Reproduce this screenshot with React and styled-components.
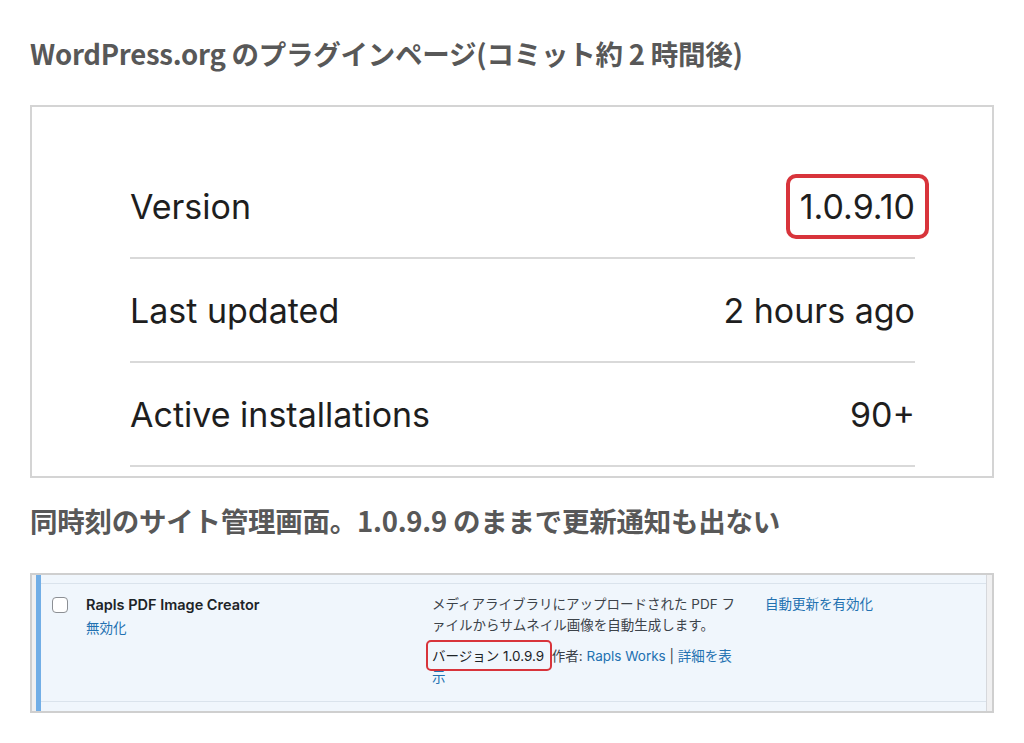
import styled, { createGlobalStyle } from "styled-components";

const GlobalStyle = createGlobalStyle`
  html, body {
    margin: 0;
    padding: 0;
    background: #fff;
  }
`;

const Page = styled.main`
  width: 964px;
  padding: 33px 30px 0;
`;

const Heading = styled.h2`
  margin: ${(p) => p.$top || 0}px 0 0;
  font-family: "Noto Sans CJK JP", sans-serif;
  font-size: 27.5px;
  line-height: 40px;
  font-weight: 700;
  color: #585858;
  letter-spacing: -0.25px;
`;

/* --- WordPress.org plugin page screenshot --- */

const Shot = styled.section`
  margin-top: ${(p) => p.$top}px;
  border: 2px solid #d4d4d4;
  background: #fff;
  padding: 48px 77px 9px 98px;
`;

const MetaRow = styled.div`
  display: flex;
  align-items: center;
  justify-content: space-between;
  height: 102px;
  border-bottom: 2px solid #d9d9d9;
  font-family: Inter, "Liberation Sans", sans-serif;
  font-size: 34px;
  line-height: 41px;
  font-weight: 400;
  color: #1e1e1e;
`;

const Highlight = styled.span`
  display: inline-block;
  padding: 8px 10px;
  margin: -12px -14px;
  border: 4px solid #d8343b;
  border-radius: 10px;
`;

/* --- WordPress admin plugin list screenshot --- */

const AdminShot = styled.section`
  margin-top: ${(p) => p.$top}px;
  border: 2px solid #cfcfcf;
  display: flex;
  font-family: Inter, "Noto Sans CJK JP", sans-serif;
  font-size: 13.5px;
  line-height: 21px;
`;

const Gutter = styled.div`
  width: ${(p) => p.$w}px;
  flex: none;
  background: #f0f0f1;
  border-left: ${(p) => (p.$edge ? "1px solid #d6d8dc" : "none")};
`;

const Accent = styled.div`
  width: 5px;
  flex: none;
  background: #72aee6;
`;

const Table = styled.div`
  flex: 1;
  background: #f0f6fc;
  padding: 8px 0 9px;
`;

const PluginRow = styled.div`
  display: flex;
  border-top: 1px solid #dae3ec;
  border-bottom: 1px solid #dae3ec;
  padding: 10px 0 13px;
`;

const CheckCell = styled.div`
  width: 45px;
  flex: none;
  padding: 3px 0 0 11px;
  box-sizing: border-box;
`;

const Checkbox = styled.span`
  display: block;
  width: 16px;
  height: 16px;
  box-sizing: border-box;
  border: 1px solid #8c8f94;
  border-radius: 4px;
  background: #fff;
`;

const TitleCell = styled.div`
  width: 346px;
  flex: none;
`;

const PluginName = styled.div`
  font-size: 14.5px;
  font-weight: 600;
  color: #1d2327;
  margin-bottom: 3px;
`;

const Link = styled.a`
  color: #2271b1;
  text-decoration: none;
`;

const DescCell = styled.div`
  width: 333px;
  flex: none;
  padding-right: 21px;
  box-sizing: border-box;
  color: #3c434a;
`;

const Para = styled.p`
  margin: 0 0 ${(p) => p.$gap || 0}px;
`;

const Marked = styled.span`
  position: relative;
  color: #1d2327;

  &::after {
    content: "";
    position: absolute;
    top: -8px;
    bottom: -7px;
    left: -6px;
    right: -8px;
    border: 2px solid #d8343b;
    border-radius: 5px;
  }
`;

const AutoCell = styled.div`
  flex: 1;
`;

export default function App() {
  const meta = [
    ["Version", "1.0.9.10", true],
    ["Last updated", "2 hours ago"],
    ["Active installations", "90+"],
  ];

  return (
    <Page>
      <GlobalStyle />
      <Heading>WordPress.org のプラグインページ(コミット約 2 時間後)</Heading>

      <Shot $top={32}>
        {meta.map(([label, value, marked]) => (
          <MetaRow key={label}>
            <span>{label}</span>
            {marked ? <Highlight>{value}</Highlight> : <span>{value}</span>}
          </MetaRow>
        ))}
      </Shot>

      <Heading $top={22}>同時刻のサイト管理画面。1.0.9.9 のままで更新通知も出ない</Heading>

      <AdminShot $top={33}>
        <Gutter $w={4} />
        <Accent />
        <Table>
          <PluginRow>
            <CheckCell>
              <Checkbox />
            </CheckCell>
            <TitleCell>
              <PluginName>Rapls PDF Image Creator</PluginName>
              <Link href="#">無効化</Link>
            </TitleCell>
            <DescCell>
              <Para $gap={10}>
                メディアライブラリにアップロードされた PDF ファイルからサムネイル画像を自動生成します。
              </Para>
              <Para>
                <Marked>バージョン 1.0.9.9</Marked>&nbsp; 作者: <Link href="#">Rapls Works</Link> |{" "}
                <Link href="#">詳細を表示</Link>
              </Para>
            </DescCell>
            <AutoCell>
              <Link href="#">自動更新を有効化</Link>
            </AutoCell>
          </PluginRow>
        </Table>
        <Gutter $w={5} $edge />
      </AdminShot>
    </Page>
  );
}
